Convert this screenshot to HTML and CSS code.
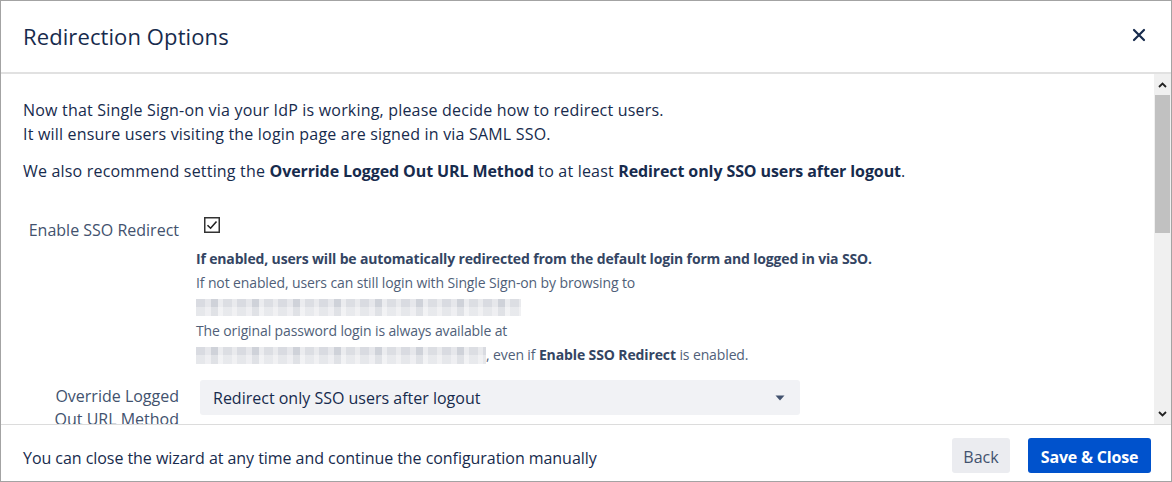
FILE: index.html
```html
<!DOCTYPE html>
<html>
<head>
<meta charset="utf-8">
<link rel="stylesheet" href="styles.css">
</head>
<body>
<div class="dialog">
  <header class="dlg-header">
    <h1 class="dlg-title">Redirection Options</h1>
    <button class="close-btn" aria-label="Close">
      <svg width="14" height="14" viewBox="0 0 14 14"><path d="M2 2 L12 12 M12 2 L2 12" stroke="#172b4d" stroke-width="2.2" stroke-linecap="round"/></svg>
    </button>
  </header>
  <div class="dlg-body">
    <div class="content">
      <p class="intro">Now that Single Sign-on via your IdP is working, please decide how to redirect users.<br>It will ensure users visiting the login page are signed in via SAML SSO.</p>
      <p class="intro">We also recommend setting the <b>Override Logged Out URL Method</b> to at least <b>Redirect only SSO users after logout</b>.</p>
      <div class="form-row">
        <div class="label">Enable SSO Redirect</div>
        <div class="field">
          <div class="checkbox">
            <svg width="16" height="16" viewBox="0 0 16 16"><rect x="0.75" y="0.75" width="14.5" height="14.5" fill="#fff" stroke="#333" stroke-width="1.5"/><path d="M3.5 8.2 L6.6 11.2 L12.5 4.5" fill="none" stroke="#222" stroke-width="1.6"/></svg>
          </div>
          <div class="desc">
            <div class="desc-strong">If enabled, users will be automatically redirected from the default login form and logged in via SSO.</div>
            <div>If not enabled, users can still login with Single Sign-on by browsing to</div>
            <div class="line"><span class="blur blur-a"></span></div>
            <div>The original password login is always available at</div>
            <div class="line"><span class="blur blur-b"></span><span>, even if <b>Enable SSO Redirect</b> is enabled.</span></div>
          </div>
        </div>
      </div>
      <div class="form-row row-select">
        <div class="label">Override Logged Out URL Method</div>
        <div class="field">
          <div class="select">
            <span>Redirect only SSO users after logout</span>
            <svg width="10" height="6" viewBox="0 0 10 6"><path d="M0.5 0.5 H9.5 L5 5.5 Z" fill="#42526e"/></svg>
          </div>
        </div>
      </div>
    </div>
    <div class="scrollbar">
      <div class="sb-btn"><svg width="9" height="6" viewBox="0 0 9 6"><path d="M1 5 L4.5 1.5 L8 5" fill="none" stroke="#222" stroke-width="1.8"/></svg></div>
      <div class="sb-track"><div class="sb-thumb"></div></div>
      <div class="sb-btn"><svg width="9" height="6" viewBox="0 0 9 6"><path d="M1 1 L4.5 4.5 L8 1" fill="none" stroke="#222" stroke-width="1.8"/></svg></div>
    </div>
  </div>
  <footer class="dlg-footer">
    <span class="footer-text">You can close the wizard at any time and continue the configuration manually</span>
    <div class="actions">
      <button class="btn btn-back">Back</button>
      <button class="btn btn-primary">Save &amp; Close</button>
    </div>
  </footer>
</div>
</body>
</html>
```
FILE: styles.css
```css
* { box-sizing: border-box; }
html, body { margin: 0; padding: 0; background: #fff; }
body { font-family: "Open Sans", "Noto Sans", sans-serif; color: #172b4d; }

.dialog {
  width: 1172px;
  height: 482px;
  border: 1px solid #a3a3a3;
  display: flex;
  flex-direction: column;
  overflow: hidden;
}

.dlg-header {
  height: 73px;
  flex: none;
  display: flex;
  align-items: center;
  justify-content: space-between;
  padding: 0 22px 0 22px;
  border-bottom: 2px solid #e1e1e1;
}
.dlg-title {
  margin: 0;
  font-size: 22px;
  font-weight: 400;
  color: #172b4d;
  letter-spacing: 0.1px;
  padding-bottom: 1px;
}
.close-btn {
  border: 0;
  background: none;
  padding: 0;
  width: 16px;
  height: 16px;
  display: flex;
  align-items: center;
  justify-content: center;
  margin-right: 2px;
  margin-bottom: 3px;
}

.dlg-body {
  height: 351px;
  flex: none;
  display: flex;
  border-bottom: 1px solid #dcdcdc;
}
.content {
  flex: 1;
  overflow: hidden;
  padding: 24px 0 0 22px;
  font-size: 16px;
}
.intro {
  margin: 0 0 13px 0;
  line-height: 24px;
  letter-spacing: 0.19px;
}
.intro b { font-weight: 700; letter-spacing: -0.1px; }

.form-row {
  display: flex;
  margin-top: 33px;
}
.label {
  width: 156px;
  flex: none;
  text-align: right;
  color: #42526e;
  line-height: 24px;
  padding-top: 2px;
}
.field {
  margin-left: 17px;
  flex: none;
}
.checkbox {
  margin-left: 8px;
  margin-top: 1px;
  height: 16px;
  line-height: 0;
}
.desc {
  margin-top: 14px;
  font-size: 14px;
  line-height: 24px;
  color: #505f79;
  letter-spacing: -0.12px;
}
.desc b, .desc-strong { font-weight: 700; color: #344563; }
.desc-strong { letter-spacing: -0.16px; }
.line { display: flex; align-items: center; height: 24px; }
.blur {
  display: inline-block;
  height: 17px;
  background:
    linear-gradient(180deg, rgba(255,255,255,0) 0 50%, rgba(255,255,255,0.35) 50% 100%),
    repeating-linear-gradient(90deg, #d9dbe1 0 9px, #e6e7eb 9px 15px, #cfd2d9 15px 22px, #ebecef 22px 27px, #dcdee3 27px 36px, #e9eaed 36px 41px);
}
.blur-a { width: 325px; }
.blur-b { width: 290px; }

.row-select { margin-top: 13px; }
.row-select .label { padding: 5px 0 0 20px; line-height: 23px; }
.row-select .field { margin-left: 21px; }
.select {
  width: 600px;
  height: 35px;
  background: #f1f2f5;
  border-radius: 3px;
  display: flex;
  align-items: center;
  justify-content: space-between;
  padding: 0 15px 0 13px;
  font-size: 16px;
  color: #172b4d;
}

.scrollbar {
  width: 17px;
  flex: none;
  background: #f0f0f0;
  display: flex;
  flex-direction: column;
}
.sb-btn {
  height: 21px;
  display: flex;
  align-items: center;
  justify-content: center;
}
.sb-track { flex: 1; }
.sb-thumb {
  margin: 0 1px;
  height: 138px;
  background: #c1c1c1;
}

.dlg-footer {
  flex: 1;
  display: flex;
  align-items: center;
  justify-content: space-between;
  padding: 0 20px 0 22px;
}
.footer-text {
  font-size: 16px;
  padding-top: 10px;
  letter-spacing: -0.05px;
}
.actions { display: flex; gap: 18px; padding-top: 5px; }
.btn {
  height: 35px;
  border: 0;
  border-radius: 3px;
  font-family: inherit;
  font-size: 16px;
  padding: 3px 0 0 0;
}
.btn-back {
  width: 58px;
  background: #ebecf0;
  color: #42526e;
}
.btn-primary {
  width: 123px;
  background: #0052cc;
  color: #fff;
  font-weight: 700;
  letter-spacing: -0.2px;
}
```
